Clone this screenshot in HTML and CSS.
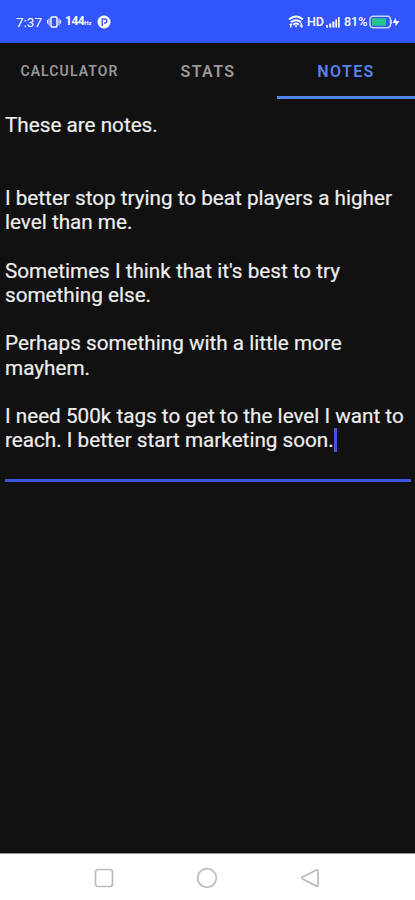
FILE: index.html
```
<!DOCTYPE html>
<html lang="en">
<head>
    <meta charset="utf-8">
    <meta name="viewport" content="width=device-width, initial-scale=1.0">
    <title>Notes</title>
    <link rel="stylesheet" href="styles.css">
</head>
<body>
<div class="wrap">
    <div class="status">
        <div class="status-left">
            <span class="time">7:37</span>
            <svg class="vibrate" width="14" height="14" viewBox="0 0 14 14">
                <rect x="4" y="2" width="6" height="10" rx="1" fill="none" stroke="#fff" stroke-width="1.4"/>
                <path d="M2 3.5v7M12 3.5v7M.5 5v3.5M13.5 5v3.5" stroke="#fff"/>
            </svg>
            <span class="speed">144<small>Hz</small></span>
            <svg class="app" width="14" height="14" viewBox="0 0 14 14">
                <circle cx="7" cy="7" r="6.5" fill="#fff"/>
                <path d="M5.3 11V4h2.500a2 2 0 0 1 0 4H7" fill="none" stroke="#3355ff" stroke-width="1.4"/>
            </svg>
        </div>
        <div class="status-right">
            <svg class="wifi" width="16" height="14" viewBox="0 0 16 14">
                <path d="M1 4.500q7-6 14 0M3 7.300q5-4.300 10 0M5.300 9.800q2.700-2.400 5.400 0" fill="none" stroke="#fff" stroke-width="1.9"/>
                <path d="M6.500 10.500h3L8 12.500zM1 10l2-2 1.500 2H3.500v2.500H2V10zM12.500 8H14v2.500h1.500l-2 2.500-2-2.500h1z" fill="#fff"/>
            </svg>
            <span class="hd">HD</span>
            <svg class="signal" width="14" height="12" viewBox="0 0 14 12">
                <path d="M0 9h2v2.500H0zM3.200 7.500h2v4h-2zM6.400 5.500h2v6h-2zM9.400 3.300h1.600v8.200H9.400zM12 1h1.700v10.500H12z" fill="#fff"/>
            </svg>
            <span class="percent">81%</span>
            <svg class="battery" width="31" height="14" viewBox="0 0 31 14">
                <rect x="1" y="1.200" width="20.500" height="11.600" rx="3.200" fill="none" stroke="#c4cfff" stroke-width="1.500"/>
                <rect x="3" y="3.300" width="14" height="7.400" rx="1" fill="#25c58b"/>
                <path d="M22.500 5v4" stroke="#c4cfff"/>
                <path d="M27 2.500v3.500h3.500L26.500 11.500V8H23.500z" fill="#fff"/>
            </svg>
        </div>
    </div>
    <div class="tabs">
        <div class="tab tab-small">CALCULATOR</div>
        <div class="tab">STATS</div>
        <div class="tab active">NOTES</div>
    </div>
    <div class="content">
        <div class="notes">
            <p class="first">These are notes.</p>
            <p>I better stop trying to beat players a higher<br>level than me.</p>
            <p>Sometimes I think that it's best to try<br>something else.</p>
            <p>Perhaps something with a little more<br>mayhem.</p>
            <p>I need 500k tags to get to the level I want to<br>reach. I better start marketing soon.<span class="cursor"></span></p>
        </div>
    </div>
    <div class="nav">
        <svg width="22" height="22" viewBox="0 0 22 22"><rect x="2.500" y="2.500" width="17" height="17" rx="2.500"/></svg>
        <svg width="22" height="22" viewBox="0 0 22 22"><circle cx="11" cy="11" r="9.300"/></svg>
        <svg width="22" height="22" viewBox="0 0 22 22"><path d="M17.500 2.900L3.600 9.900q-1.600 1.100 0 2.200l13.900 7q1.500.4 1.500-1.200V4.100q0-1.600-1.500-1.200z"/></svg>
    </div>
</div>
</body>
</html>
```
FILE: styles.css
```
html, body {
    height: 100%;
    margin: 0;
    padding: 0;
}

body {
    background: #111;
    color: #eee;
    font-family: Roboto, sans-serif;
}

p {
    margin: 0;
}

svg {
    display: block;
    flex: none;
}

.wrap {
    display: flex;
    flex-direction: column;
    height: 100%;
    overflow: hidden;
}

.status {
    display: flex;
    justify-content: space-between;
    box-sizing: border-box;
    height: 43px;
    padding: 0 15px 0 16px;
    background: #3355ff;
    color: #fff;
    font-size: 13.5px;
    line-height: 44px;
    white-space: nowrap;
}

.status-left, .status-right {
    display: flex;
    align-items: center;
}

.time {
    width: 31px;
}

.speed {
    width: 32px;
    margin-left: 4px;
    font-size: 12px;
    font-weight: 700;
    letter-spacing: -.5px;
}

.speed small {
    font-size: 6px;
    letter-spacing: 0;
}

.hd {
    width: 19px;
    margin-left: 3px;
    font-size: 12.5px;
    font-weight: 500;
}

.percent {
    width: 25px;
    margin-left: 4px;
    font-size: 12.5px;
    font-weight: 500;
}

.tabs {
    display: grid;
    grid-template-columns: 139px 138px 138px;
    grid-template-rows: 56px;
}

.tab {
    box-sizing: border-box;
    height: 56px;
    border-bottom: 3px solid transparent;
    color: #999;
    font-size: 16px;
    font-weight: 600;
    letter-spacing: 1.4px;
    line-height: 57px;
    text-align: center;
}

.tab-small {
    font-size: 14px;
    letter-spacing: 1.1px;
}

.active {
    border-bottom-color: #5484ed;
    color: #5484ed;
}

.content {
    flex: 1;
    padding: 14px 4px 0 5px;
}

.notes {
    height: 366px;
    border-bottom: 3px solid #3e54df;
    font-size: 20.7px;
    line-height: 24.25px;
    white-space: nowrap;
    -webkit-text-stroke: .2px #eee;
}

.notes p {
    margin-bottom: 24.25px;
}

.notes .first {
    margin-bottom: 48.5px;
}

.cursor {
    display: inline-block;
    width: 3px;
    height: 24px;
    background: #3e54df;
    vertical-align: -5px;
}

.nav {
    display: flex;
    align-items: center;
    justify-content: space-between;
    box-sizing: border-box;
    height: 47px;
    padding: 2px 94px 0 93px;
    border-top: 1px solid #999;
    background: #fff;
}

.nav svg {
    fill: none;
    stroke: #bbb;
    stroke-width: 1.7;
}
```
